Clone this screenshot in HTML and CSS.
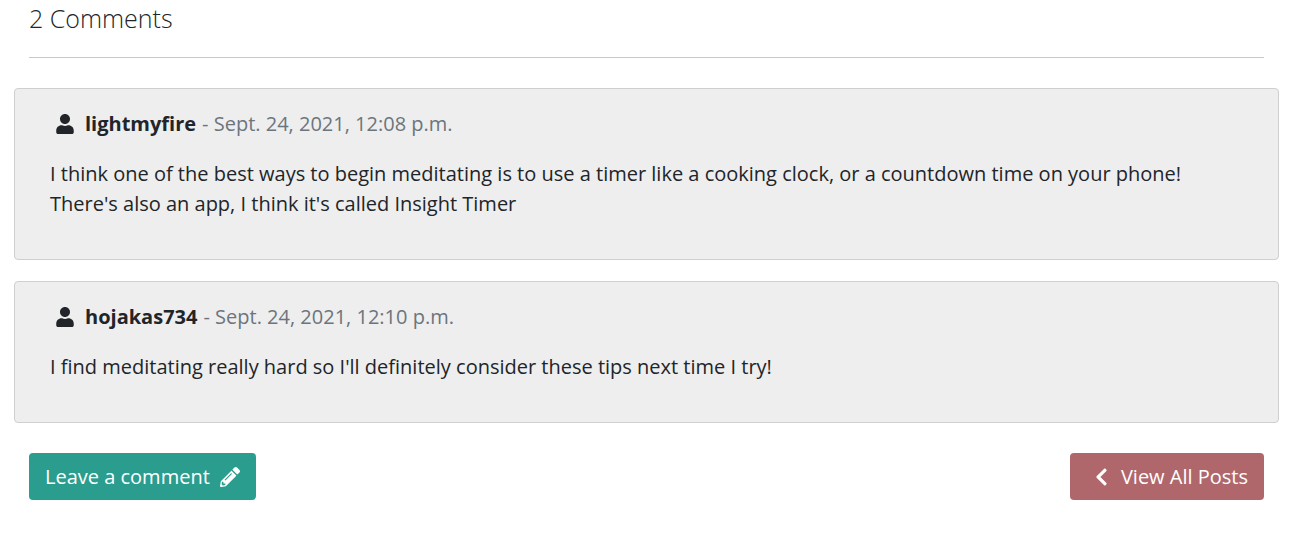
FILE: index.html
```html
<!DOCTYPE html>
<html lang="en">
<head>
<meta charset="utf-8">
<meta name="viewport" content="width=device-width, initial-scale=1">
<title>Comments</title>
<link rel="stylesheet" href="styles.css">
</head>
<body>
<main class="comments">
  <header class="comments-header">
    <h2 class="comments-title">2 Comments</h2>
  </header>
  <article class="card">
    <div class="card-meta">
      <svg class="icon-user" viewBox="0 0 448 512" aria-hidden="true"><path d="M224 256c70.700 0 128-57.300 128-128S294.700 0 224 0 96 57.300 96 128s57.300 128 128 128zm89.600 32h-16.700c-22.200 10.200-46.900 16-72.900 16s-50.600-5.800-72.900-16h-16.700C60.200 288 0 348.200 0 422.400V464c0 26.500 21.500 48 48 48h352c26.500 0 48-21.500 48-48v-41.600c0-74.200-60.200-134.400-134.400-134.400z"/></svg>
      <span class="author">lightmyfire</span>
      <span class="date">- Sept. 24, 2021, 12:08 p.m.</span>
    </div>
    <p class="card-text">I think one of the best ways to begin meditating is to use a timer like a cooking clock, or a countdown time on your phone!<br>There's also an app, I think it's called Insight Timer</p>
  </article>
  <article class="card">
    <div class="card-meta">
      <svg class="icon-user" viewBox="0 0 448 512" aria-hidden="true"><path d="M224 256c70.700 0 128-57.300 128-128S294.700 0 224 0 96 57.300 96 128s57.300 128 128 128zm89.600 32h-16.700c-22.200 10.200-46.900 16-72.900 16s-50.600-5.800-72.900-16h-16.700C60.200 288 0 348.200 0 422.400V464c0 26.500 21.500 48 48 48h352c26.500 0 48-21.500 48-48v-41.600c0-74.200-60.200-134.400-134.400-134.400z"/></svg>
      <span class="author">hojakas734</span>
      <span class="date">- Sept. 24, 2021, 12:10 p.m.</span>
    </div>
    <p class="card-text">I find meditating really hard so I'll definitely consider these tips next time I try!</p>
  </article>
  <div class="actions">
    <button type="button" class="btn btn-comment">Leave a comment
      <svg class="icon-pencil" viewBox="0 0 512 512" aria-hidden="true"><path d="M497.900 142.100l-46.100 46.100c-4.700 4.700-12.300 4.700-17 0l-111-111c-4.700-4.700-4.700-12.300 0-17l46.100-46.100c18.700-18.700 49.100-18.700 67.900 0l60.100 60.100c18.800 18.700 18.800 49.100 0 67.900zM284.200 99.800L21.600 362.400.4 483.900c-2.900 16.400 11.400 30.600 27.800 27.800l121.500-21.300 262.600-262.600c4.700-4.700 4.700-12.300 0-17l-111-111c-4.800-4.700-12.400-4.700-17.100 0zM124.100 339.900c-5.500-5.500-5.500-14.300 0-19.800l154-154c5.500-5.500 14.300-5.500 19.800 0s5.500 14.300 0 19.800l-154 154c-5.500 5.500-14.300 5.500-19.800 0zM88 424h48v36.300l-64.500 11.300-31.100-31.100L51.700 376H88v48z"/></svg>
    </button>
    <a class="btn btn-posts" href="#">
      <svg class="icon-chevron" viewBox="0 0 320 512" aria-hidden="true"><path d="M34.520 239.030L228.870 44.690c9.370-9.370 24.570-9.370 33.940 0l22.670 22.670c9.360 9.360 9.370 24.520.04 33.900L131.490 256l154.020 154.750c9.340 9.380 9.320 24.540-.04 33.900l-22.670 22.670c-9.370 9.370-24.570 9.370-33.940 0L34.520 272.970c-9.370-9.370-9.370-24.570 0-33.940z"/></svg>
      View All Posts</a>
  </div>
</main>
</body>
</html>
```
FILE: styles.css
```css
* {
  box-sizing: border-box;
}

body {
  margin: 0;
  background: #fff;
  color: #212529;
  font: 400 20px/30px "Open Sans", sans-serif;
}

.comments {
  display: flex;
  flex-direction: column;
  gap: 21px;
  padding: 3px 33px 54px 14px;
}

.comments-header {
  margin: 0 15px 9px;
  padding-bottom: 24px;
  border-bottom: 1px solid #c8c8c8;
}

.comments-title {
  margin: 0;
  font-size: 25px;
  font-weight: 300;
  line-height: 30px;
}

.card {
  padding: 20px 35px 40px;
  background: #eee;
  border: 1px solid #cfcfcf;
  border-radius: 4px;
}

.card-meta {
  display: flex;
  align-items: center;
}

.icon-user {
  width: 18px;
  height: 20px;
  margin: 0 11px 0 6px;
  fill: currentColor;
}

.author {
  margin-right: 6px;
  font-weight: 700;
}

.date {
  color: #6c757d;
}

.card-text {
  margin: 20px 0 0;
}

.actions {
  display: flex;
  justify-content: space-between;
  margin: 9px 15px 0;
}

.btn {
  display: flex;
  align-items: center;
  gap: 10px;
  padding: 9px 16px 8px;
  border: 0;
  border-radius: 4px;
  color: #fff;
  font: inherit;
  text-decoration: none;
  cursor: pointer;
}

.btn svg {
  height: 20px;
  fill: currentColor;
}

.btn-comment {
  background: #2a9d8f;
}

.btn-posts {
  gap: 13px;
  background: #b0676b;
}

.icon-pencil {
  width: 20px;
}

.icon-chevron {
  width: 13px;
  margin-left: 9px;
}
```
